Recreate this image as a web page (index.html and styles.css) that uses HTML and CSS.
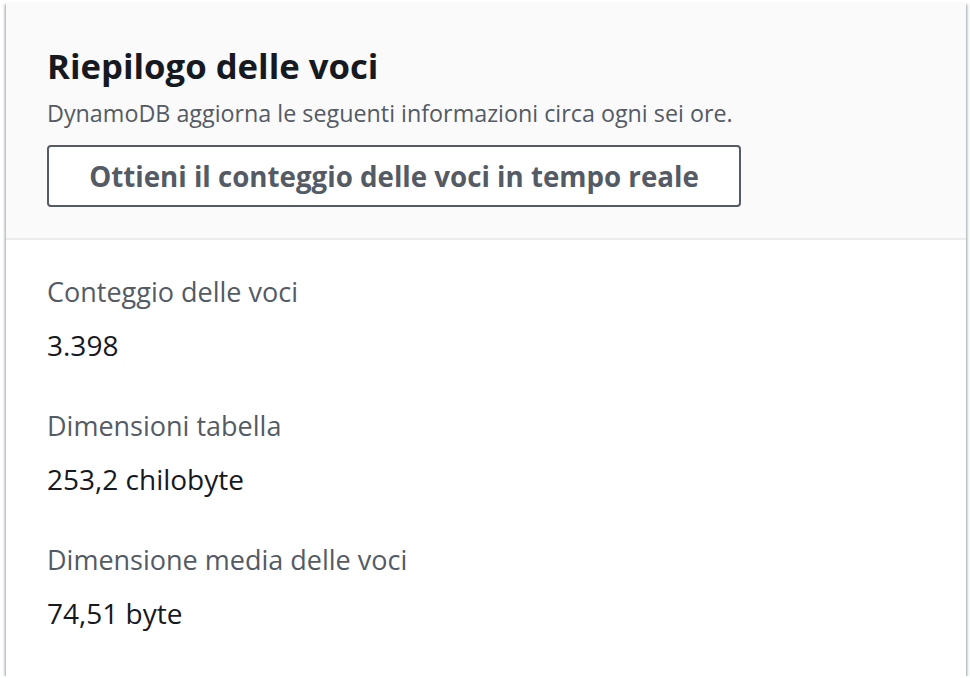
FILE: index.html
```html
<!DOCTYPE html>
<html lang="it">
<head>
<meta charset="utf-8">
<title>Riepilogo delle voci</title>
<link rel="stylesheet" href="styles.css">
</head>
<body>
<section class="card">
  <header class="card-header">
    <h2 class="title">Riepilogo delle voci</h2>
    <p class="description">DynamoDB aggiorna le seguenti informazioni circa ogni sei ore.</p>
    <button class="btn" type="button">Ottieni il conteggio delle voci in tempo reale</button>
  </header>
  <div class="card-body">
    <div class="kv">
      <div class="kv-label">Conteggio delle voci</div>
      <div class="kv-value">3.398</div>
    </div>
    <div class="kv">
      <div class="kv-label">Dimensioni tabella</div>
      <div class="kv-value">253,2 chilobyte</div>
    </div>
    <div class="kv">
      <div class="kv-label">Dimensione media delle voci</div>
      <div class="kv-value">74,51 byte</div>
    </div>
  </div>
</section>
</body>
</html>
```
FILE: styles.css
```css
html, body {
  margin: 0;
  padding: 0;
  background: #ffffff;
}

body {
  font-family: "Open Sans", "Noto Sans", Arial, sans-serif;
  color: #16191f;
  padding: 3px 4px 0 6px;
}

.card {
  width: 960px;
  height: 673px;
  box-sizing: border-box;
  background: #ffffff;
  box-shadow: 0 2px 2px 0 rgba(0, 28, 36, 0.35), 2px 1px 2px 0 rgba(0, 28, 36, 0.18), -2px 1px 2px 0 rgba(0, 28, 36, 0.18);
  display: flex;
  flex-direction: column;
}

.card-header {
  background: #fafafa;
  border-bottom: 2px solid #eaeded;
  padding: 43px 41px 0;
  height: 239px;
  box-sizing: border-box;
}

.title {
  margin: 0;
  font-size: 34.7px;
  line-height: 40px;
  font-weight: 700;
  color: #16191f;
}

.description {
  margin: 12px 0 0;
  font-size: 23.3px;
  line-height: 30px;
  color: #545b64;
}

.btn {
  margin-top: 17px;
  width: 694px;
  height: 62px;
  box-sizing: border-box;
  border: 2px solid #545b64;
  border-radius: 4px;
  background: #ffffff;
  color: #545b64;
  font-family: inherit;
  font-size: 27.7px;
  font-weight: 700;
  padding: 0;
  display: flex;
  align-items: center;
  justify-content: center;
}

.card-body {
  padding: 34px 41px 45px;
  display: flex;
  flex-direction: column;
  gap: 45px;
}

.kv-label {
  font-size: 27px;
  line-height: 36px;
  color: #545b64;
}

.kv-value {
  margin-top: 17px;
  font-size: 28px;
  line-height: 36px;
  color: #16191f;
}
```
